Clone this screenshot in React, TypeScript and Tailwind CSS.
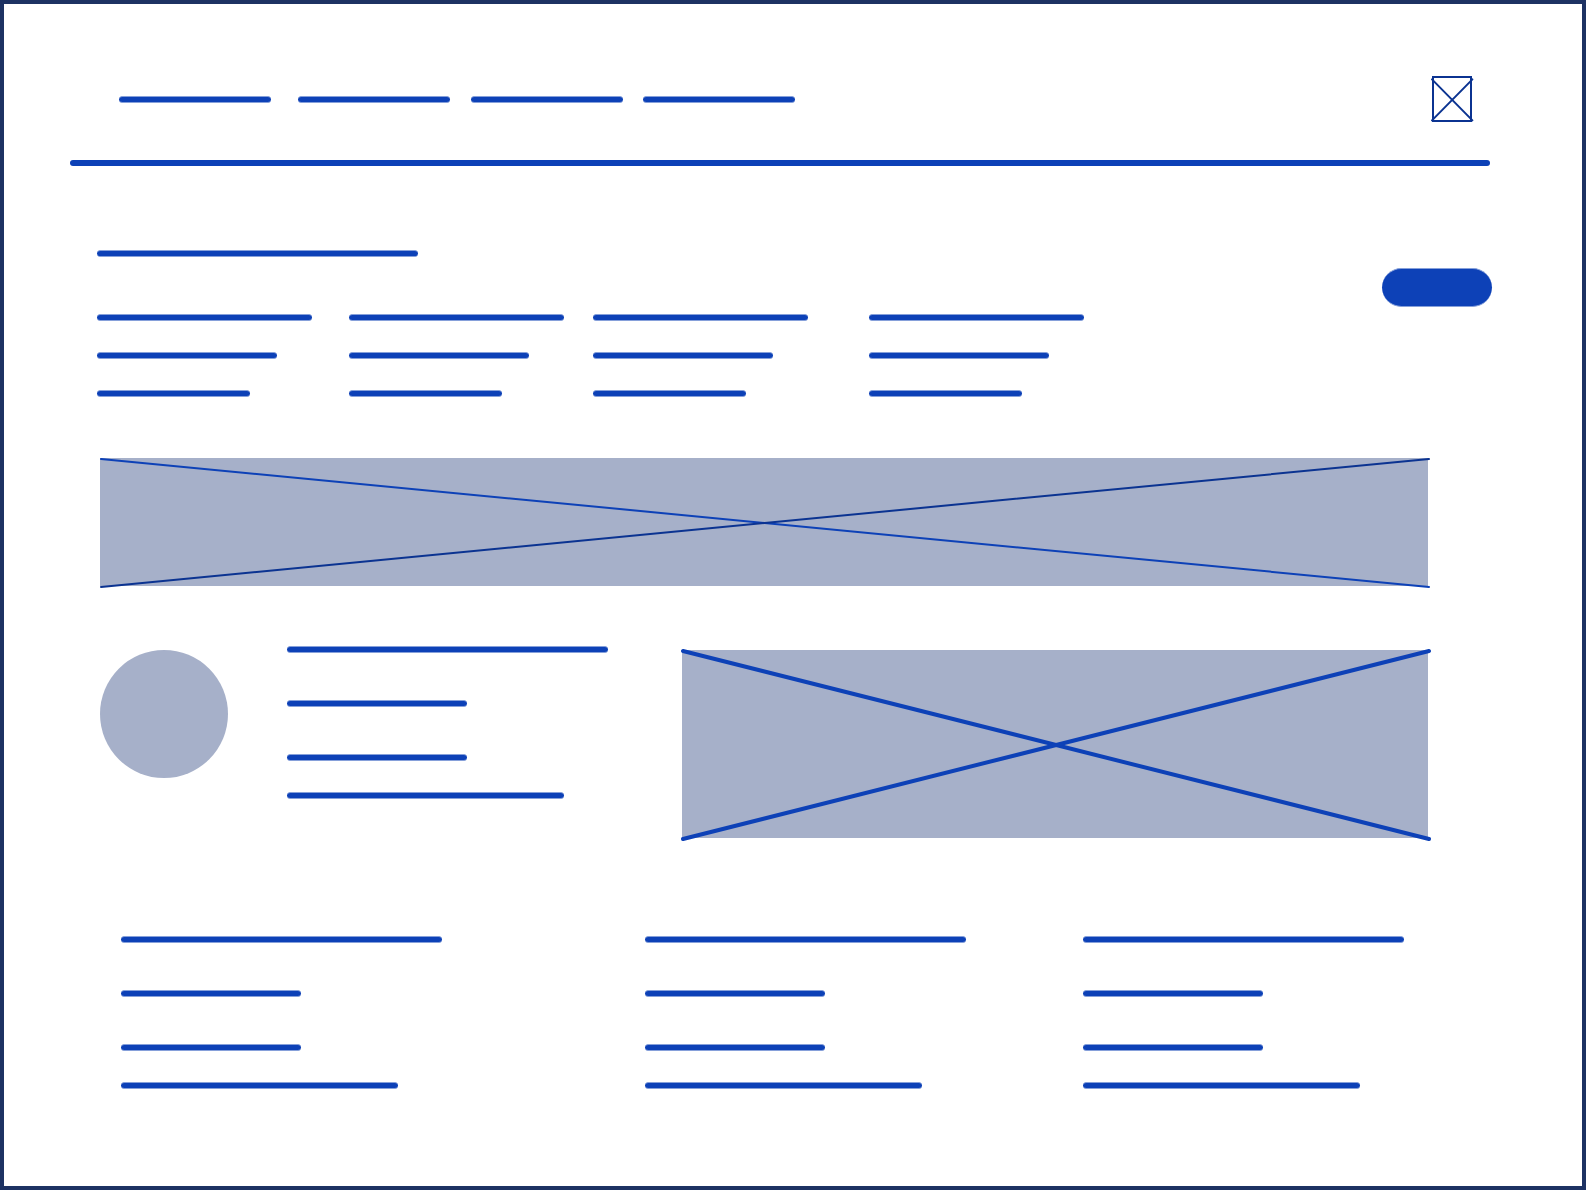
import clsx from "clsx";

/** A placeholder text line with round ends. */
function Line({ width, className }: { width: string; className?: string }) {
  return (
    <span
      className={clsx(
        "block h-[7px] max-w-full rounded-full border-y border-[#86a0da] bg-[#0d41b7]",
        width,
        className,
      )}
    />
  );
}

/** A grey picture placeholder crossed by its two diagonals. */
function Placeholder({
  className,
  stroke,
  rising,
  label,
}: {
  className: string;
  stroke: number;
  rising: string;
  label: string;
}) {
  return (
    <div role="img" aria-label={label} className={clsx("relative bg-[#a6b0c9]", className)}>
      <svg
        className="absolute top-px left-px size-full overflow-visible"
        strokeWidth={stroke}
        strokeLinecap="round"
        aria-hidden="true"
      >
        <line x1="0" y1="0" x2="100%" y2="100%" stroke="#0d41b7" />
        <line x1="0" y1="100%" x2="100%" y2="0" stroke={rising} />
      </svg>
    </div>
  );
}

function Logo() {
  return (
    <svg
      role="img"
      aria-label="Logo"
      width="40"
      height="47"
      viewBox="0 0 40 47"
      fill="none"
      stroke="#0b3391"
      strokeWidth="2"
      strokeLinecap="round"
      className="shrink-0 overflow-visible"
    >
      <rect x="1" y="1" width="38" height="44" />
      <path d="M0 3.4 40.4 44.4M0 44.4 40.4 3.4" />
    </svg>
  );
}

function Column() {
  return (
    <div className="flex flex-col gap-[31px]">
      <Line width="w-[215px]" />
      <Line width="w-[180px]" />
      <Line width="w-[153px]" />
    </div>
  );
}

function TextBlock() {
  return (
    <div>
      <Line width="w-[321px]" />
      <Line width="w-[180px]" className="mt-[47px]" />
      <Line width="w-[180px]" className="mt-[47px]" />
      <Line width="w-[277px]" className="mt-[31px]" />
    </div>
  );
}

export default function App() {
  return (
    <div className="flex min-h-screen flex-col border-4 border-[#1d3263] bg-white pb-[60px] font-['Liberation_Sans',sans-serif]">
      <header className="pt-[72px] pr-[92px] pl-[66px]">
        <div className="flex items-center justify-between pr-[18px] pl-[49px]">
          <nav aria-label="Main" className="grid grid-cols-[179px_173px_172px_152px]">
            {["Home", "Products", "About", "Contact"].map((name) => (
              <a key={name} href="#" aria-label={name}>
                <Line width="w-[152px]" />
              </a>
            ))}
          </nav>
          <Logo />
        </div>
        <hr className="mt-[37px] h-[6px] rounded-full border-0 bg-[#0d41b7]" />
      </header>

      <main>
        <section className="mt-[84px] flex items-start pr-[90px] pl-[93px]">
          <div className="flex-1">
            <Line width="w-[321px]" />
            <div className="mt-[57px] grid grid-cols-[252fr_244fr_276fr_513fr]">
              <Column />
              <Column />
              <Column />
              <Column />
            </div>
          </div>
          <button
            type="button"
            aria-label="Continue"
            className="mt-[18px] h-[39px] w-[110px] shrink-0 rounded-full border-y border-[#86a0da] bg-[#0d41b7]"
          />
        </section>

        <div className="mt-[61px] pr-[154px] pl-24">
          <Placeholder className="h-32" stroke={2} rising="#0b3391" label="Banner" />
        </div>

        <section className="mt-[60px] flex items-start pr-[154px] pl-24">
          <div role="img" aria-label="Avatar" className="mt-1 size-32 shrink-0 rounded-full bg-[#a6b0c9]" />
          <div className="ml-[59px] w-[321px]">
            <TextBlock />
          </div>
          <Placeholder className="mt-1 ml-[74px] h-[188px] flex-1" stroke={4} rising="#0d41b7" label="Picture" />
        </section>
      </main>

      <footer className="mt-[98px] grid grid-cols-[524fr_438fr_499fr] pl-[117px]">
        <TextBlock />
        <TextBlock />
        <TextBlock />
      </footer>
    </div>
  );
}
